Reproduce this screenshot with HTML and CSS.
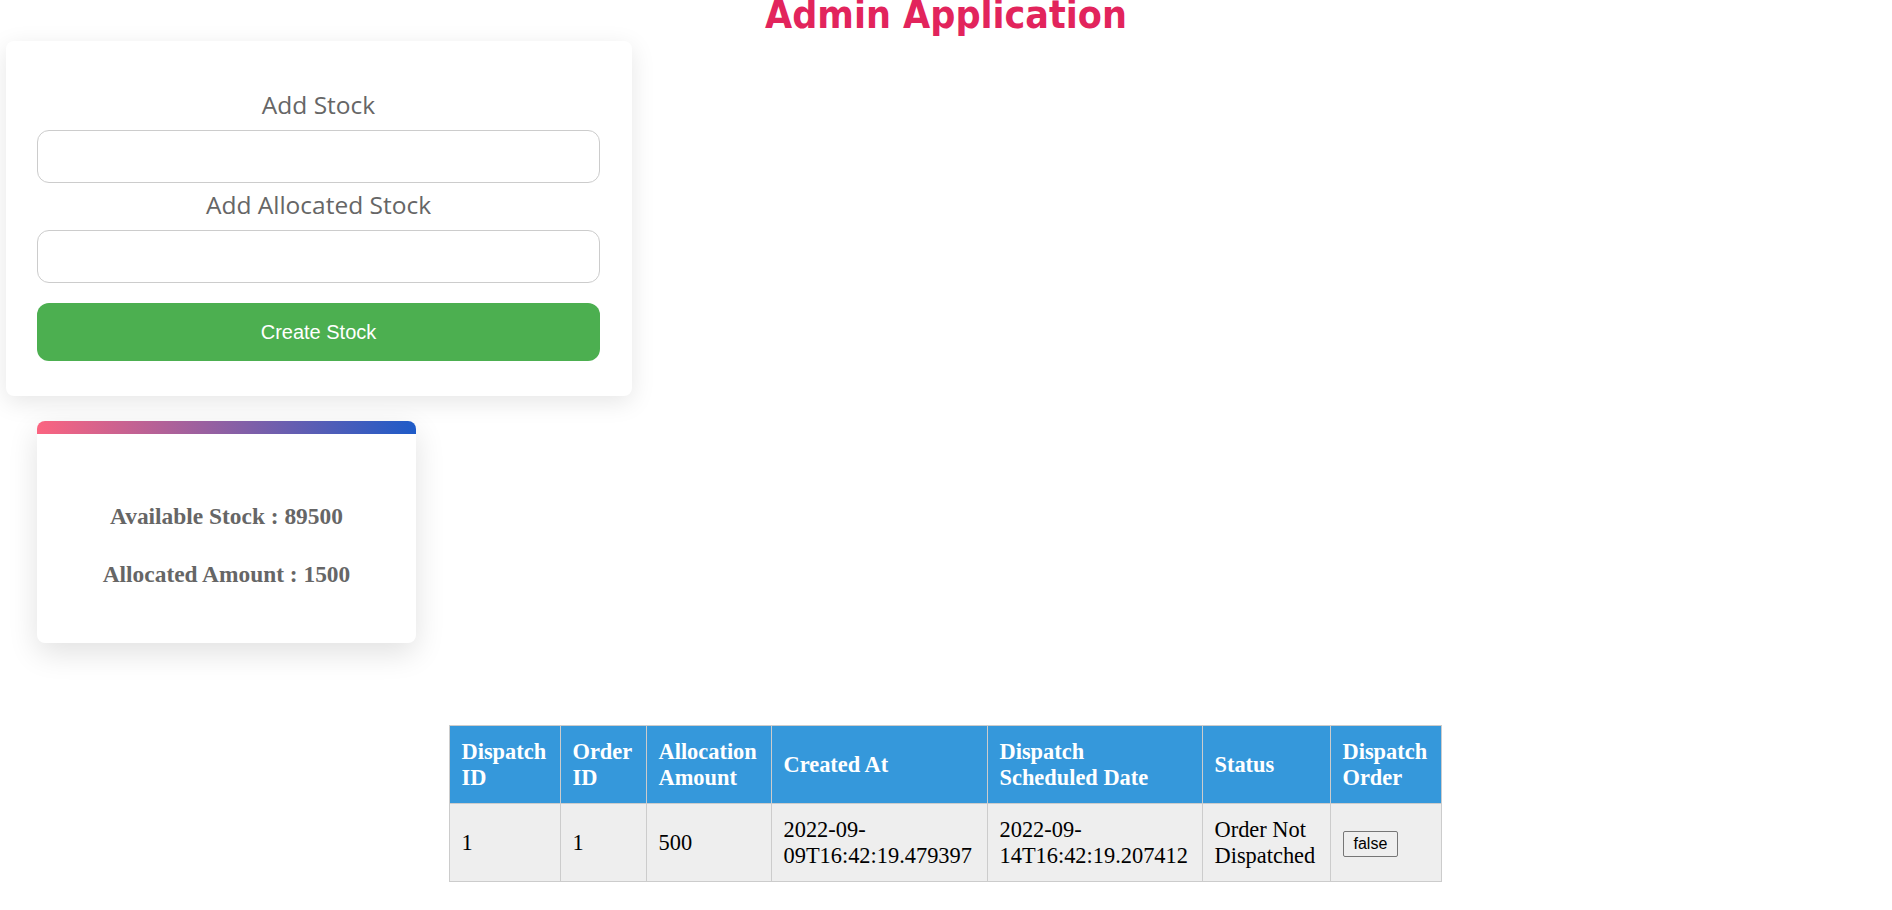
FILE: index.html
```html
<!DOCTYPE html>
<html lang="en">
<head>
<meta charset="utf-8">
<title>Admin Application</title>
<link rel="stylesheet" href="styles.css">
</head>
<body>
<h1 class="title">Admin Application</h1>

<div class="stock-form">
  <label class="field-label">Add Stock</label>
  <input class="field-input" type="text">
  <label class="field-label second">Add Allocated Stock</label>
  <input class="field-input" type="text">
  <button class="create-btn" type="button">Create Stock</button>
</div>

<div class="stats-card">
  <div class="stats-bar"></div>
  <div class="stats-body">
    <h3 class="stat">Available Stock : 89500</h3>
    <h3 class="stat">Allocated Amount : 1500</h3>
  </div>
</div>

<table class="dispatch-table">
  <colgroup>
    <col class="c-dispatch-id">
    <col class="c-order-id">
    <col class="c-amount">
    <col class="c-created">
    <col class="c-scheduled">
    <col class="c-status">
    <col class="c-action">
  </colgroup>
  <thead>
    <tr>
      <th>Dispatch ID</th>
      <th>Order ID</th>
      <th>Allocation Amount</th>
      <th>Created At</th>
      <th class="scheduled">Dispatch Scheduled Date</th>
      <th>Status</th>
      <th>Dispatch Order</th>
    </tr>
  </thead>
  <tbody>
    <tr>
      <td>1</td>
      <td>1</td>
      <td>500</td>
      <td>2022-09-09T16:42:19.479397</td>
      <td class="scheduled">2022-09-14T16:42:19.207412</td>
      <td>Order Not Dispatched</td>
      <td><button class="dispatch-btn" type="button">false</button></td>
    </tr>
  </tbody>
</table>
</body>
</html>
```

FILE: styles.css
```css
body {
  margin: 0;
  background: #ffffff;
}

.title {
  margin: -5px 0 0;
  text-align: center;
  font-family: "DejaVu Sans Condensed", "DejaVu Sans", sans-serif;
  font-weight: bold;
  font-size: 39px;
  line-height: 39px;
  color: #e2245c;
}

.stock-form {
  box-sizing: border-box;
  width: 626px;
  margin: 7px 0 0 6px;
  padding: 47px 32px 35px 31px;
  background: #ffffff;
  border-radius: 8px;
  box-shadow: 0 6px 24px rgba(0, 0, 0, 0.1);
  display: flex;
  flex-direction: column;
}

.field-label {
  display: block;
  text-align: center;
  font-family: "Open Sans", sans-serif;
  font-size: 24.5px;
  line-height: 33px;
  color: #666666;
  margin: 0 0 9px;
}

.field-label.second {
  margin-top: 5px;
}

.field-input {
  box-sizing: border-box;
  width: 100%;
  height: 53px;
  margin: 0;
  padding: 0 12px;
  border: 1px solid #cccccc;
  border-radius: 12px;
  font-size: 16px;
  background: #ffffff;
}

.create-btn {
  margin-top: 20px;
  height: 58px;
  border: none;
  border-radius: 12px;
  background: #4caf50;
  color: #ffffff;
  font-family: "Liberation Sans", Arial, sans-serif;
  font-size: 20px;
}

.stats-card {
  width: 379px;
  margin: 25px 0 0 37px;
  border-radius: 8px;
  overflow: hidden;
  background: #ffffff;
  box-shadow: 0 10px 30px rgba(0, 0, 0, 0.12);
}

.stats-bar {
  height: 13px;
  background: linear-gradient(to right, #fb6480, #1e5bc8);
}

.stats-body {
  padding: 69px 0 55px;
  display: flex;
  flex-direction: column;
  align-items: center;
  gap: 31px;
}

.stat {
  margin: 0;
  font-family: "Liberation Serif", serif;
  font-weight: bold;
  font-size: 23.4px;
  line-height: 27px;
  color: #666666;
}

.dispatch-table {
  margin: 82px auto 0;
  width: 992px;
  table-layout: fixed;
  border-collapse: collapse;
  font-family: "Liberation Serif", serif;
  font-size: 22.4px;
  position: relative;
  left: -1px;
}

.c-dispatch-id { width: 111px; }
.c-order-id { width: 86px; }
.c-amount { width: 125px; }
.c-created { width: 216px; }
.c-scheduled { width: 215px; }
.c-status { width: 128px; }
.c-action { width: 111px; }

.dispatch-table th,
.dispatch-table td {
  border: 1px solid #cccccc;
  padding: 12.5px 11.5px 12.5px 12px;
  text-align: left;
}

.dispatch-table .scheduled {
  padding-right: 14.5px;
}

.dispatch-table th {
  background: #3598db;
  color: #ffffff;
  font-weight: bold;
}

.dispatch-table td {
  background: #eeeeee;
  color: #000000;
}

.dispatch-btn {
  font-family: "Liberation Sans", Arial, sans-serif;
  font-size: 16px;
  padding: 3px 10px;
  border: 1px solid #767676;
  border-radius: 2px;
  background: #efefef;
  color: #000000;
}
```
